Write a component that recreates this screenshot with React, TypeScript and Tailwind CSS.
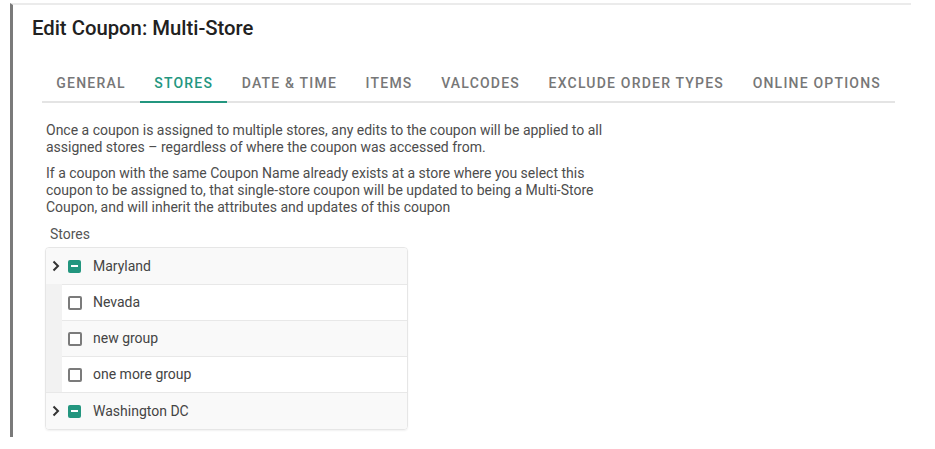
import React from 'react'

const tabs = ['GENERAL', 'STORES', 'DATE & TIME', 'ITEMS', 'VALCODES', 'EXCLUDE ORDER TYPES', 'ONLINE OPTIONS']

type Row = { label: string; group: boolean }

const rows: Row[] = [
  { label: 'Maryland', group: true },
  { label: 'Nevada', group: false },
  { label: 'new group', group: false },
  { label: 'one more group', group: false },
  { label: 'Washington DC', group: true },
]

function Chevron() {
  return (
    <svg width="10" height="12" viewBox="0 0 10 12" className="shrink-0">
      <polyline points="2.5,1.5 7,6 2.5,10.5" fill="none" stroke="#333" strokeWidth="2" />
    </svg>
  )
}

function Indeterminate() {
  return (
    <span className="flex h-[13px] w-[13px] shrink-0 items-center justify-center rounded-[2px] bg-[#23967f]">
      <span className="h-[2px] w-[7px] bg-white" />
    </span>
  )
}

function EmptyBox() {
  return <span className="h-[14px] w-[14px] shrink-0 rounded-[2px] border-2 border-[#7b7b7b] bg-white" />
}

export default function App() {
  return (
    <div className="h-[449px] w-[935px] bg-white" style={{ fontFamily: 'Roboto, "Liberation Sans", sans-serif' }}>
      <div className="ml-[10px] mt-[3px] h-[434px] w-[901px] border-l-[3px] border-t-2 border-l-[#7a7a7a] border-t-[#ebebeb]">
        <h1 className="pl-[19px] pt-[9px] text-[20.3px] leading-[28px] font-medium text-[#212121]">
          Edit Coupon: Multi-Store
        </h1>

        <div className="ml-[29px] mt-[23px] flex h-[38px] w-[853px] border-b-2 border-[#e4e4e4]">
          {tabs.map((t) => (
            <div
              key={t}
              className={
                t === 'STORES'
                  ? 'relative flex shrink-0 items-center whitespace-nowrap px-[14.3px] text-[14px] font-medium tracking-[1.2px] text-[#23967f]'
                  : 'flex shrink-0 items-center whitespace-nowrap px-[14.3px] text-[14px] font-medium tracking-[1.2px] text-[#777]'
              }
            >
              {t}
              {t === 'STORES' && <span className="absolute -bottom-[2px] left-0 right-0 h-[2px] bg-[#23967f]" />}
            </div>
          ))}
        </div>

        <div className="ml-[33px] mt-[19px] w-[580px] text-[14px] leading-[17px] text-[#4d4d4d]">
          <p>
            Once a coupon is assigned to multiple stores, any edits to the coupon will be applied to all assigned stores –
            regardless of where the coupon was accessed from.
          </p>
          <p className="mt-[9px]">
            If a coupon with the same Coupon Name already exists at a store where you select this coupon to be assigned
            to, that single-store coupon will be updated to being a Multi-Store Coupon, and will inherit the attributes
            and updates of this coupon
          </p>
          <div className="ml-[4px] mt-[10px] text-[#555]">Stores</div>
        </div>

        <div className="ml-[32px] mt-[4px] w-[363px] overflow-hidden rounded-[4px] border border-[#e6e6e6] shadow-[0_1px_2px_rgba(0,0,0,0.06)] text-[14px] text-[#444]">
          {rows.map((r, i) => (
            <div
              key={r.label}
              className={
                i === 0
                  ? 'flex h-[36px] items-center bg-[#f9f9f9]'
                  : r.group
                    ? 'flex h-[37px] items-center border-t border-[#e8e8e8] bg-[#f9f9f9]'
                    : 'flex h-[36px] items-stretch bg-[#f2f2f2]'
              }
            >
              {r.group ? (
                <div className="flex items-center pl-[5px]">
                  <Chevron />
                  <span className="ml-[7px]" />
                  <Indeterminate />
                  <span className="ml-[12px]">{r.label}</span>
                </div>
              ) : (
                <div
                  className={
                    i % 2 === 1
                      ? 'ml-[16px] flex flex-1 items-center border-t border-[#e8e8e8] bg-white pl-[6px]'
                      : 'ml-[16px] flex flex-1 items-center border-t border-[#e8e8e8] bg-[#f9f9f9] pl-[6px]'
                  }
                >
                  <EmptyBox />
                  <span className="ml-[11px]">{r.label}</span>
                </div>
              )}
            </div>
          ))}
        </div>
      </div>
    </div>
  )
}
